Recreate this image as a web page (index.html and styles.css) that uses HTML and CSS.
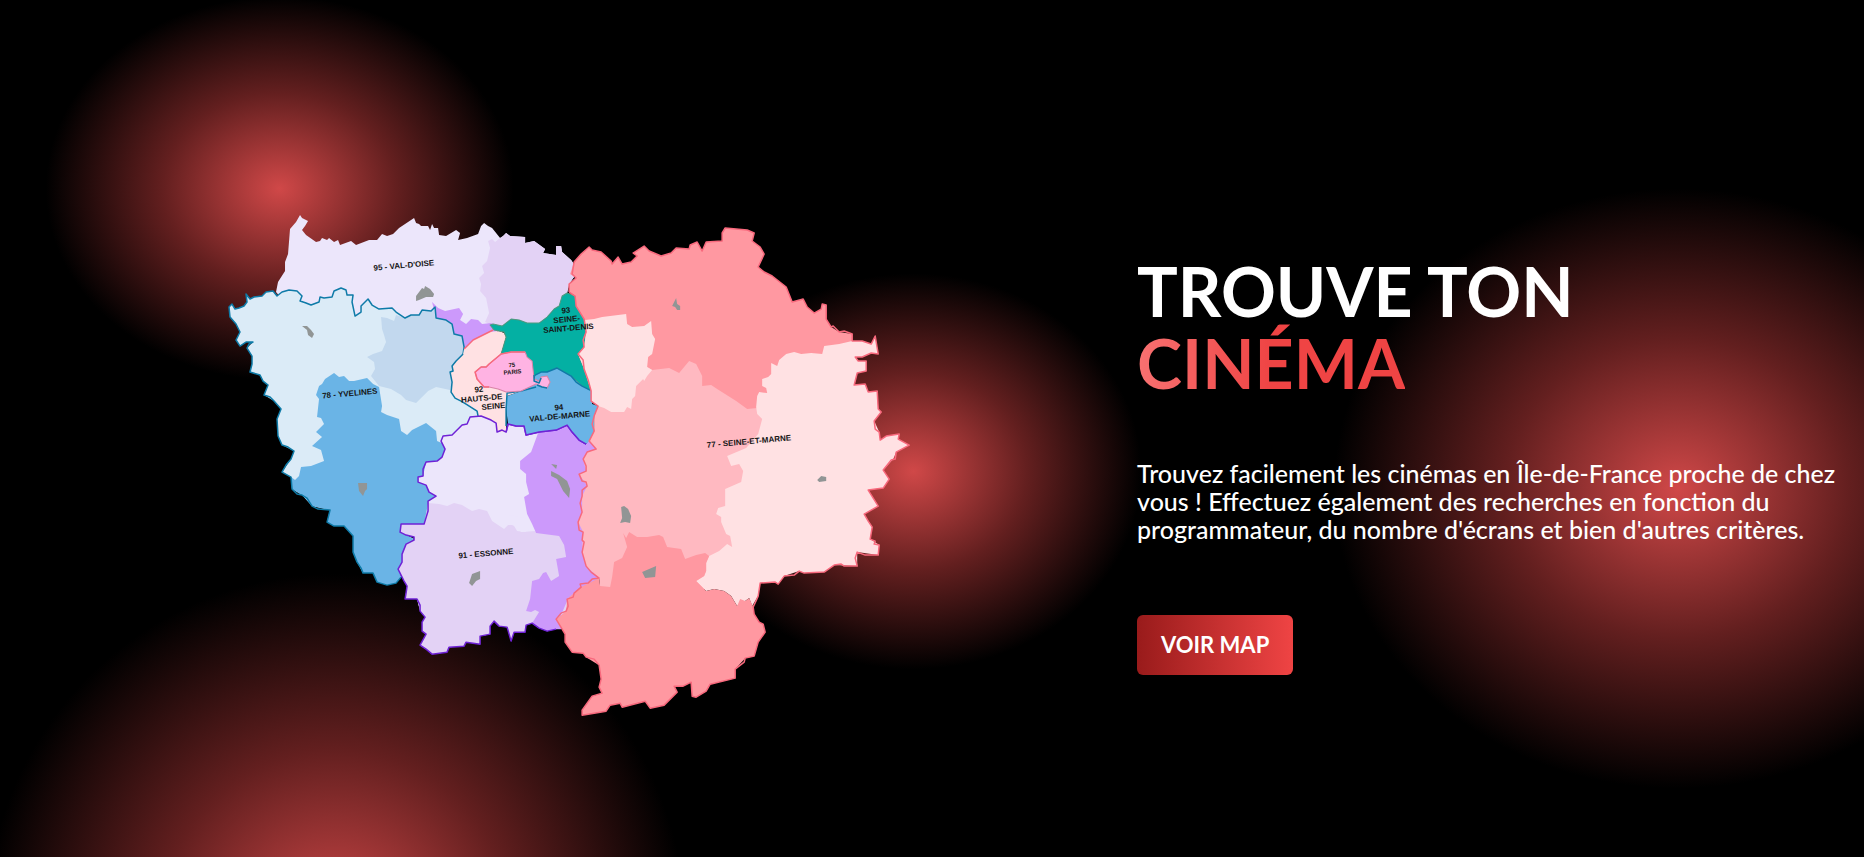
FILE: index.html
```html
<!DOCTYPE html>
<html lang="fr">
<head>
<meta charset="utf-8">
<title>Trouve ton cinéma</title>
<link rel="stylesheet" href="styles.css">
</head>
<body>
<main class="hero">
  <div class="hero-visual">
    <svg class="map" viewBox="228 213 682 504" role="img" aria-label="Carte des départements d'Île-de-France">
      <!-- 95 Val-d'Oise -->
      <path class="lilac" d="M277 293L279 283L286 272L286 263L289 255L291 230L297 223L301 216L303 219L309 222L306 227L303 231L307 236L317 243L321 242L323 239L328 241L330 239L335 243L339 241L341 246L352 242L357 246L370 241L378 241L383 235L388 237L394 235L400 229L415 219L417 224L420 225L422 227L429 227L431 231L433 225L435 229L439 229L440 236L447 237L457 231L461 234L459 241L468 239L479 235L482 227L485 224L489 227L493 229L497 234L501 239L504 237L507 234L511 237L526 238L526 244L535 242L546 250L544 254L557 256L557 247L562 247L563 253L572 261L574 264L577 275L570 285L568 294L560 307L555 310L548 318L540 324L528 324L520 321L512 320L503 327L492 325L480 342L465 352L430 330L300 320Z"/>
      <path class="mauve" d="M489 242L493 240L496 243L501 239L504 237L507 234L511 237L526 238L526 244L535 242L546 250L544 254L557 256L557 247L562 247L563 253L572 261L574 264L577 275L570 285L568 294L560 307L555 310L548 318L540 324L528 324L520 321L512 320L503 327L492 326L486 323L490 314L487 299L481 292L482 285L480 279L485 274L483 267L488 262L491 249Z"/>
      <path class="purple" d="M433 303L439 309L446 312L460 309L464 315L461 321L467 325L472 320L479 321L483 325L492 324L499 328L498 334L480 341L465 350L455 338L437 320Z"/>
      <!-- 78 Yvelines -->
      <path class="sky-pale" d="M230 308L233 305L236 310L240 309L245 307L248 303L247 295L251 300L255 298L263 297L267 293L274 292L278 297L283 293L290 291L298 292L303 297L301 302L307 304L312 306L320 303L321 298L325 299L333 298L335 292L342 289L347 291L348 296L354 296L353 303L356 317L362 313L362 307L369 300L373 306L380 310L393 309L397 313L406 319L412 316L420 316L423 311L432 312L436 308L437 319L447 321L453 325L455 335L463 337L465 348L464 355L457 362L453 367L454 372L451 373L453 383L452 393L456 399L462 402L467 405L478 412L479 417L471 418L466 440L450 450L445 462L429 475L425 483L437 497L425 525L402 525L401 533L415 540L407 545L403 563L399 570L402 578L397 584L388 586L378 583L374 574L364 574L358 563L354 553L354 537L345 527L335 527L328 523L331 511L313 507L303 496L293 490L292 478L283 473L292 460L295 452L283 446L279 437L278 420L282 410L275 402L265 396L269 386L264 382L261 376L251 373L253 365L253 357L248 349L254 343L247 343L241 347L237 341L241 333L237 325L231 318Z"/>
      <path class="sky-mid" d="M382 318L388 319L395 322L397 316L406 319L412 316L420 316L423 311L432 312L436 308L437 319L447 321L453 325L455 335L463 337L465 348L464 355L457 362L453 367L454 372L451 373L453 383L451 391L437 388L429 392L423 398L417 404L407 401L402 396L392 390L380 387L372 377L376 370L375 363L368 358L374 355L383 352L387 343L385 336L383 330Z"/>
      <path class="sky" d="M320 400L317 396L320 387L323 385L326 380L335 374L340 378L345 377L350 382L355 382L368 379L374 385L380 388L383 407L382 413L388 416L400 420L402 432L408 436L413 431L427 424L437 432L438 442L445 445L450 450L445 462L429 475L425 483L437 497L425 525L402 525L401 533L415 540L407 545L403 563L399 570L402 578L397 584L388 586L378 583L374 574L364 574L358 563L354 553L354 537L345 527L335 527L328 523L331 511L313 507L303 496L293 490L292 478L296 481L300 477L302 468L312 467L325 462L322 451L313 447L323 438L317 433L325 425L322 419L318 418Z"/>
      <path class="line-blue" d="M402 578L397 584L388 586L378 583L374 574L364 574L362 569L358 563L354 553L354 537L345 527L335 527L328 523L331 511L319 510L313 507L308 499L303 496L298 495L293 490L292 478L283 473L287 466L292 460L295 452L289 448L283 446L279 437L278 420L282 410L275 402L271 398L265 396L269 386L264 382L261 376L251 373L253 365L253 357L248 349L250 345L254 343L247 343L241 347L237 341L241 333L237 325L231 318L230 308L233 305L236 310L240 309L245 307L248 303L247 295L251 300L255 298L263 297L267 293L274 292L278 297L283 293L290 291L298 292L303 297L301 302L307 304L312 306L320 303L321 298L325 299L333 298L335 292L342 289L347 291L348 296L354 296L353 303L356 317L362 313L362 307L369 300L373 306L380 310L393 309L397 313L406 319L412 316L420 316L423 311L432 312L436 308L437 319L447 321L453 325L455 335L463 337L465 348L464 355"/>
      <!-- 92 Hauts-de-Seine -->
      <path class="blush" d="M465 350L474 341L490 333L500 332L505 334L507 338L502 355L515 365L522 392L508 397L507 410L507 425L507 433L498 433L497 424L479 417L478 412L467 405L456 399L452 393L453 383L451 373L454 372L453 367L457 362L464 355Z"/>
      <path class="line-pink" d="M465 350L474 341L490 333L494 331"/>
      <path class="line-blue" d="M464 355L457 362L453 367L454 372L451 373L453 383L452 393L456 399L462 402L467 405L478 412L479 417"/>
      <!-- 91 Essonne -->
      <path class="lilac" d="M471 418L482 417L492 421L497 424L498 433L507 433L509 425L517 427L525 427L527 436L540 433L557 431L568 426L573 433L580 441L587 445L597 450L584 470L583 553L600 579L568 600L557 620L557 630L540 629L533 624L527 626L526 633L515 633L512 642L508 628L500 627L495 622L491 627L491 635L481 637L481 645L467 643L465 647L450 648L448 653L433 655L427 650L421 646L427 635L423 632L423 623L426 618L421 612L418 600L406 600L408 587L405 582L399 570L403 563L403 555L407 545L415 541L415 538L407 536L401 533L402 525L425 525L429 512L429 502L437 497L430 493L427 486L419 483L419 478L424 477L427 463L438 462L443 458L446 450L442 442L444 437L453 436L457 432L463 426L468 425Z"/>
      <path class="mauve" d="M429 504L440 505L448 507L455 504L463 506L473 512L480 510L488 512L493 522L505 530L509 526L515 526L522 533L537 532L580 530L590 579L557 630L540 629L533 624L527 626L526 633L515 633L512 642L508 628L500 627L495 622L491 627L491 635L481 637L481 645L467 643L465 647L450 648L448 653L433 655L427 650L421 646L427 635L423 632L423 623L426 618L421 612L418 600L406 600L408 587L405 582L399 570L403 563L403 555L407 545L415 541L415 538L407 536L401 533L402 525L425 525Z"/>
      <path class="lilac" d="M505 529L509 524L515 527L518 532L526 533L531 530L531 520L505 515Z"/>
      <path class="purple" d="M539 434L557 431L568 426L573 433L580 441L587 445L590 440L599 448L597 455L588 480L588 553L602 579L568 602L562 616L562 630L557 630L548 632L540 629L533 624L540 613L536 611L532 613L527 612L531 600L533 582L540 580L544 574L547 573L552 582L560 577L557 560L567 558L565 546L560 537L537 534L533 525L528 515L525 498L530 495L527 483L527 475L521 470L521 462L532 453Z"/>
      <path class="line-violet" d="M557 630L548 632L540 629L533 624L527 626L526 633L515 633L512 642L508 628L500 627L495 622L491 627L491 635L481 637L481 645L467 643L465 647L450 648L448 653L433 655L427 650L421 646L427 635L423 632L423 623L426 618L421 612L421 606L418 600L406 600L407 594L408 587L405 582L399 570L403 563L403 555L407 545L415 541L415 538L407 536L401 533L402 525L425 525L429 512L429 502L437 497L430 493L427 486L419 483L419 478L424 477L424 470L427 463L438 462L443 458L446 450L442 442L444 437L453 436L457 432L463 426L468 425L471 418L482 417L492 421L497 424L498 433L503 431L507 433L509 425L517 427L525 427L527 436L540 433L557 431L568 426L573 433L580 441L587 445"/>
      <!-- 93 Seine-Saint-Denis -->
      <path class="teal" d="M491 326L494 325L503 327L512 320L520 321L528 324L540 324L548 318L555 310L560 307L563 297L568 294L576 297L577 307L585 320L587 333L585 348L579 355L585 370L592 392L583 387L572 377L558 369L537 378L520 370L502 355L507 338L505 333L495 331Z"/>
      <!-- 94 Val-de-Marne -->
      <path class="sky" d="M537 376L542 373L548 373L558 369L572 377L583 387L592 392L593 405L599 407L595 417L595 432L590 442L587 445L580 441L573 433L568 426L557 431L540 433L527 436L525 427L517 427L509 425L507 410L508 397L522 392L532 384Z"/>
      <path class="line-blue" d="M507 427L507 410L508 394L522 392L537 388M536 376L542 373L548 373L558 369L572 377L577 383L583 387L591 391"/>
      <path class="line-violet" d="M507 433L509 425L517 427L525 427L527 436L540 433L557 431L568 426L573 433L580 441L587 445"/>
      <!-- 75 Paris -->
      <path class="paris" d="M476 373L482 368L487 368L490 365L502 355L512 353L526 353L528 358L533 362L535 380L540 382L542 378L548 377L551 383L548 389L543 388L537 385L522 392L507 393L499 390L490 388L485 388L478 380Z"/>
      <path class="line-blue" d="M535 376L535 382L540 384L542 379M538 386L543 388L548 389"/>
      <!-- 77 Seine-et-Marne -->
      <path class="rose" d="M587 320L650 315L740 390L757 400L768 425L750 560L710 590L640 595L612 590L601 588L600 579L587 567L583 553L584 533L579 523L583 513L583 497L588 487L580 475L587 472L584 460L588 453L597 450L590 442L595 432L595 417L599 407L592 402L592 392L585 370L579 355L585 348L587 333L585 320Z"/>
      <path class="coral" d="M575 263L582 255L590 248L593 251L602 253L612 262L613 265L619 258L623 265L632 263L638 257L634 254L645 247L650 252L662 257L672 254L677 249L690 250L691 246L698 243L703 252L707 243L723 242L723 234L726 229L748 231L755 234L753 242L761 248L765 255L759 268L765 273L773 277L787 288L793 303L804 300L808 308L815 314L822 310L823 305L827 306L827 320L832 328L840 333L853 335L853 345L800 380L758 409L748 410L737 402L718 390L712 386L703 387L703 377L697 365L690 362L680 374L670 369L653 371L648 368L627 330L588 322L585 320L577 307L576 297L570 293L570 285L577 279L571 275Z"/>
      <path class="blush" d="M586 321L595 320L603 318L627 315L628 325L633 328L645 327L652 322L653 335L656 340L653 355L649 358L648 368L653 371L648 377L645 382L644 380L637 387L636 397L633 400L632 410L628 408L625 413L612 413L605 409L599 407L592 402L592 392L585 370L579 355L585 348L587 333Z"/>
      <path class="blush" d="M757 408L758 397L760 393L768 394L767 389L763 387L763 380L769 378L772 375L772 364L778 367L780 361L787 355L795 353L802 355L812 354L823 355L825 347L840 345L853 342L863 342L872 345L876 337L879 355L872 354L863 358L856 358L859 362L867 362L867 372L858 374L855 386L866 385L869 393L878 392L879 410L882 413L875 422L880 433L881 441L887 437L900 435L899 440L910 446L897 453L894 460L884 471L890 480L884 489L869 491L879 507L865 515L873 528L871 540L880 546L879 556L858 553L858 567L835 566L825 573L805 574L800 572L785 577L779 585L776 583L761 584L759 597L753 607L750 599L746 602L738 607L732 597L725 592L715 590L707 592L697 582L705 577L707 572L707 564L710 557L720 552L728 545L733 548L731 537L727 535L722 523L722 518L717 515L719 509L726 507L726 490L742 483L744 472L740 465L732 467L728 457L747 449L759 435L763 420L758 415Z"/>
      <path class="coral" d="M600 579L601 587L611 588L613 578L615 563L623 559L628 548L624 534L627 539L630 533L638 538L648 538L660 536L664 538L668 548L682 550L686 560L697 556L706 554L710 557L707 564L707 572L705 577L697 582L707 592L715 590L725 592L732 597L738 607L741 600L746 602L750 599L754 608L755 615L760 623L764 625L766 633L759 643L755 657L746 659L736 670L736 679L711 685L707 692L697 698L693 697L692 683L684 687L675 687L678 693L665 706L651 709L646 702L623 708L621 704L611 706L607 712L583 716L583 711L593 697L603 694L600 688L602 680L600 666L587 658L584 654L573 653L566 643L566 635L557 620L567 612L568 600L582 588Z"/>
      <path class="line-pink" d="M570 293L570 285L577 279L573 275L575 263L582 255L590 248L593 251L602 253L612 262L613 265L619 258L623 265L632 263L638 257L634 254L645 247L650 252L662 257L672 254L677 249L690 250L691 246L698 243L703 252L707 243L723 242L723 234L726 229L748 231L755 234L753 242L761 248L765 255L759 268L765 273L773 277L787 288L793 303L804 300L808 308L815 314L822 310L823 305L827 306L827 320L832 328L834 327L840 333L845 332L853 335L853 342L863 342L872 345L876 337L879 355L872 354L863 358L856 358L859 362L867 362L867 372L858 374L855 386L866 385L869 393L878 392L879 410L882 413L875 422L876 430L880 433L881 441L887 437L900 435L899 440L910 446L897 453L896 460L892 461L884 471L890 480L884 489L869 491L879 507L865 515L869 522L873 528L871 540L876 542L875 545L880 546L879 556L866 556L858 553L856 559L858 567L845 567L842 565L835 566L825 573L805 574L800 572L795 576L785 577L779 585L776 583L761 584L759 597L754 608L755 615L760 623L764 625L766 633L759 643L755 657L746 659L745 663L736 670L736 679L711 685L707 692L697 698L693 697L692 683L684 687L675 687L678 693L665 706L651 709L646 702L623 708L621 704L611 706L607 712L583 716L583 711L593 697L603 694L600 688L602 680L600 666L595 660L587 658L584 654L573 653L566 643L566 635L557 620L562 614L567 612L569 607L568 600L574 598L575 594L582 588L581 585L589 584L593 580L600 579L592 573L587 567L585 560L583 553L585 543L583 541L584 533L580 531L579 523L583 513L581 504L583 497L583 491L588 487L587 483L583 482L580 475L587 472L587 467L584 460L588 453L597 450L590 442L595 432L593 425L595 417L599 407L592 402L592 392L589 381L585 370L584 361L579 355L585 348L584 341L587 333L585 320L577 307L576 297L570 293"/>
      <path class="line-pink" d="M490 388L485 388L478 380L476 373L482 368L487 368L490 365L502 355L512 353L526 353"/>
      <!-- villes -->
      <path class="town" d="M417 297L420 293L423 289L425 290L426 287L431 290L435 295L434 298L427 298L420 301L417 302ZM303 327L308 327L312 331L315 335L313 339L309 336L308 331ZM677 299L678 305L681 307L681 311L678 311L676 308L673 307ZM359 484L368 484L368 490L366 492L364 497L360 492ZM552 465L558 466L557 470ZM552 472L556 474L560 476L568 482L571 490L570 499L564 492L558 480L552 477ZM481 572L481 580L477 582L473 587L470 584L473 575ZM622 508L625 507L629 510L632 517L631 524L626 523L621 524L623 519ZM643 573L650 570L657 567L656 578L646 579ZM818 481L822 477L827 478L827 482L820 483Z"/>
      <g class="labels">
        <text transform="translate(405 269) rotate(-5)">95 - VAL-D'OISE</text>
        <text transform="translate(351 397) rotate(-5)">78 - YVELINES</text>
        <text transform="translate(487 557) rotate(-5)">91 - ESSONNE</text>
        <text transform="translate(750 445) rotate(-5)">77 - SEINE-ET-MARNE</text>
        <text transform="translate(567 314) rotate(-5)"><tspan x="0">93</tspan><tspan x="0" dy="9">SEINE-</tspan><tspan x="1" dy="9">SAINT-DENIS</tspan></text>
        <text transform="translate(480 393) rotate(-5)"><tspan x="0">92</tspan><tspan x="2" dy="9">HAUTS-DE</tspan><tspan x="13" dy="9">SEINE</tspan></text>
        <text transform="translate(560 411) rotate(-5)"><tspan x="0">94</tspan><tspan x="0" dy="9">VAL-DE-MARNE</tspan></text>
        <text class="small" transform="translate(513 368) rotate(-5)"><tspan x="0">75</tspan><tspan x="0" dy="7">PARIS</tspan></text>
      </g>
    </svg>
  </div>
  <div class="hero-text">
    <h1 class="title">TROUVE TON<br><span class="accent">CINÉMA</span></h1>
    <p class="lead">Trouvez facilement les cinémas en Île-de-France proche de chez vous ! Effectuez également des recherches en fonction du programmateur, du nombre d'écrans et bien d'autres critères.</p>
    <button class="cta" type="button">VOIR MAP</button>
  </div>
</main>
</body>
</html>
```
FILE: styles.css
```css
* {
  box-sizing: border-box;
  margin: 0;
}

body {
  background: #000;
  color: #fff;
  font-family: "Trebuchet MS", Lato, "Open Sans", sans-serif;
}

.hero {
  display: grid;
  grid-template-columns: 61fr 39fr;
  align-items: center;
  min-height: 100vh;
  padding-top: 72px;
  background:
    radial-gradient(234px 192px at 15% 22%, #d04848, #631f1f 50%, transparent),
    radial-gradient(228px 198px at 49% 55%, #d04848, #631f1f 50%, transparent),
    radial-gradient(344px 300px at 90% 57%, #d04848, #631f1f 50%, transparent),
    radial-gradient(350px 352px at 18% 108%, #d04848, #631f1f 50%, transparent),
    #000;
}

.hero-visual {
  display: flex;
  justify-content: center;
}

.map {
  display: block;
  width: 60%;
}

.map path {
  stroke-linejoin: round;
}

.lilac { fill: #ece6fb; }
.mauve { fill: #e3d2f5; }
.purple { fill: #cc99fb; }
.sky-pale { fill: #dbebf7; }
.sky-mid { fill: #c2d8ee; }
.sky { fill: #6ab4e6; }
.teal { fill: #04b0a3; stroke: #4f9a80; }
.paris { fill: #ffb3e3; stroke: #d884a8; }
.blush { fill: #ffe1e3; }
.rose { fill: #ffb9c1; }
.coral { fill: #ff98a1; }
.town { fill: #919595; }

.line-blue,
.line-violet,
.line-pink {
  fill: none;
  stroke-width: 1.5;
}

.line-blue { stroke: #0e7ba8; }
.line-violet { stroke: #6f22d6; }
.line-pink { stroke: #f8697d; }

.labels text {
  fill: #151515;
  font-family: "Liberation Sans Narrow", "Liberation Sans", sans-serif;
  font-size: 8px;
  font-weight: 700;
  text-anchor: middle;
}

.labels .small {
  font-size: 6px;
}

.hero-text {
  padding-right: 24px;
}

.title {
  font-size: 68px;
  font-weight: 700;
  line-height: 72px;
}

.accent {
  background: linear-gradient(90deg, #f87171, #ef4444 50%);
  -webkit-background-clip: text;
  background-clip: text;
  color: transparent;
}

.lead {
  margin: 60px 0 72px;
  font-size: 25px;
  font-weight: 500;
  line-height: 28px;
}

.cta {
  padding: 16px 24px;
  border: 0;
  border-radius: 6px;
  background: linear-gradient(90deg, #991b1b, #ef4444);
  color: #fff;
  font-family: inherit;
  font-size: 22px;
  font-weight: 700;
  line-height: 28px;
  cursor: pointer;
}
```
